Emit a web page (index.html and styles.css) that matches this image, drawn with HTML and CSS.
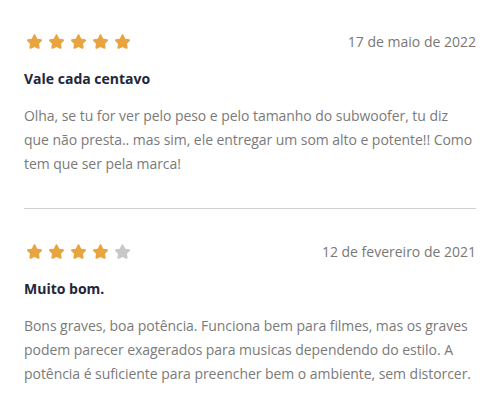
FILE: index.html
```html
<!DOCTYPE html>
<html lang="pt">
<head>
<meta charset="utf-8">
<link rel="stylesheet" href="styles.css">
</head>
<body>
<svg width="0" height="0" class="defs">
  <defs>
    <path id="star" d="M8 1.2 C8.5 1.2 8.8 1.5 9 2 L10.6 5.3 L14.2 5.8 C15.1 5.9 15.4 6.9 14.8 7.5 L12.2 10.1 L12.8 13.7 C13 14.6 12 15.2 11.3 14.8 L8 13.1 L4.7 14.8 C4 15.2 3 14.6 3.2 13.7 L3.8 10.1 L1.2 7.5 C0.6 6.9 0.9 5.9 1.8 5.8 L5.4 5.3 L7 2 C7.2 1.5 7.5 1.2 8 1.2 Z"/>
  </defs>
</svg>
<main class="reviews">
  <article class="review">
    <div class="review-head">
      <div class="stars">
        <svg class="star on" viewBox="0 0 16 16"><use href="#star"/></svg>
        <svg class="star on" viewBox="0 0 16 16"><use href="#star"/></svg>
        <svg class="star on" viewBox="0 0 16 16"><use href="#star"/></svg>
        <svg class="star on" viewBox="0 0 16 16"><use href="#star"/></svg>
        <svg class="star on" viewBox="0 0 16 16"><use href="#star"/></svg>
      </div>
      <span class="date">17 de maio de 2022</span>
    </div>
    <h3 class="title">Vale cada centavo</h3>
    <p class="body">Olha, se tu for ver pelo peso e pelo tamanho do subwoofer, tu diz que não presta.. mas sim, ele entregar um som alto e potente!! Como tem que ser pela marca!</p>
  </article>
  <hr class="divider">
  <article class="review">
    <div class="review-head">
      <div class="stars">
        <svg class="star on" viewBox="0 0 16 16"><use href="#star"/></svg>
        <svg class="star on" viewBox="0 0 16 16"><use href="#star"/></svg>
        <svg class="star on" viewBox="0 0 16 16"><use href="#star"/></svg>
        <svg class="star on" viewBox="0 0 16 16"><use href="#star"/></svg>
        <svg class="star off" viewBox="0 0 16 16"><use href="#star"/></svg>
      </div>
      <span class="date">12 de fevereiro de 2021</span>
    </div>
    <h3 class="title">Muito bom.</h3>
    <p class="body">Bons graves, boa potência. Funciona bem para filmes, mas os graves podem parecer exagerados para musicas dependendo do estilo. A potência é suficiente para preencher bem o ambiente, sem distorcer.</p>
  </article>
</main>
</body>
</html>
```
FILE: styles.css
```css
html, body {
  margin: 0;
  padding: 0;
  background: #ffffff;
}
body {
  font-family: "Open Sans", "Noto Sans", sans-serif;
  color: #777777;
}
.defs {
  position: absolute;
  width: 0;
  height: 0;
}
.reviews {
  padding: 31px 24px 0 24px;
}
.review-head {
  display: flex;
  align-items: center;
  justify-content: space-between;
  height: 20px;
}
.stars {
  display: flex;
  gap: 5px;
  padding-left: 2px;
}
.star {
  width: 17px;
  height: 17px;
  display: block;
}
.star.on { fill: #e8a43f; }
.star.off { fill: #c8c8c8; }
.date {
  font-size: 14px;
  color: #787878;
}
.title {
  margin: 18px 0 0 0;
  font-size: 14px;
  font-weight: 700;
  color: #23263a;
  line-height: 20px;
}
.body {
  margin: 15px 0 0 0;
  font-size: 14px;
  letter-spacing: -0.05px;
  line-height: 24px;
  color: #7a7a7a;
}
.divider {
  border: none;
  border-top: 1px solid #cfcfcf;
  margin: 32px 0 32px 0;
}
```
